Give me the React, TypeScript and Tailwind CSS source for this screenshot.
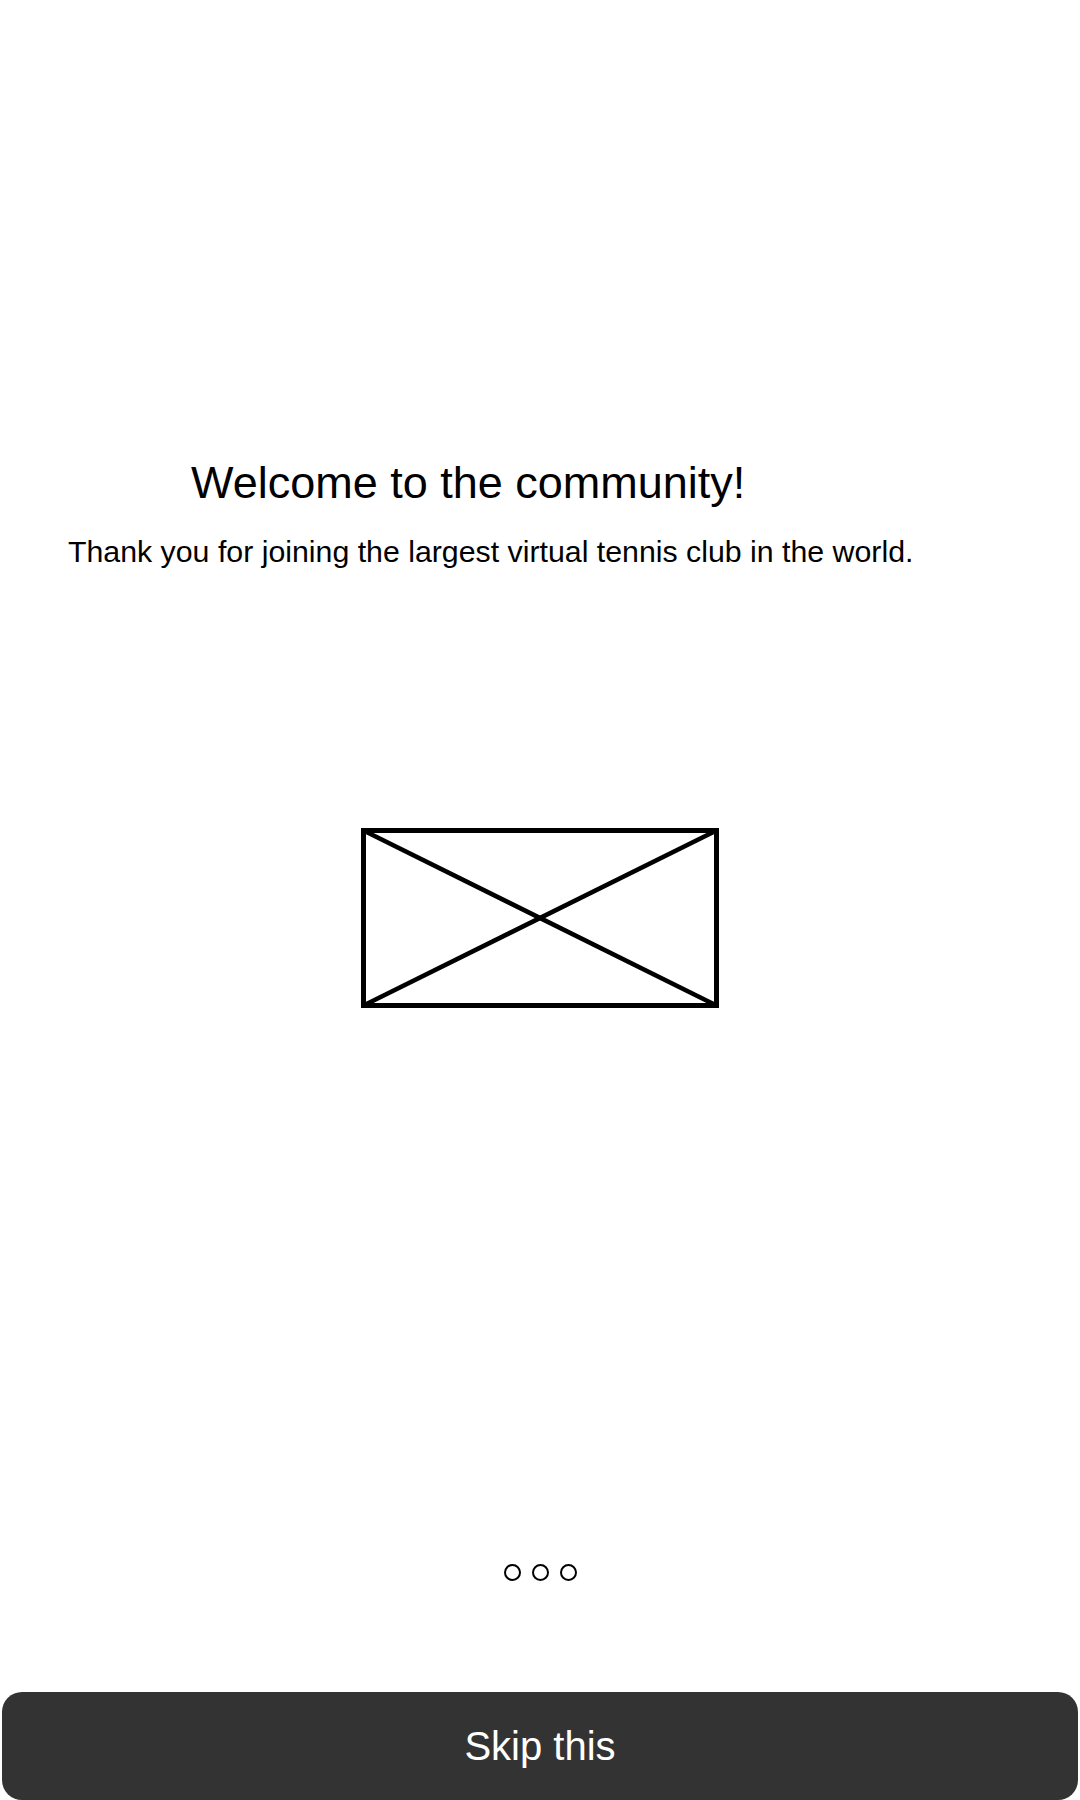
import React from 'react';

const ImagePlaceholder = () => (
    <svg width="358" height="180" viewBox="0 0 358 180" className="block">
        <rect x="2.5" y="2.5" width="353" height="175" fill="none" stroke="#000" strokeWidth="5" />
        <line x1="2.5" y1="2.5" x2="355.5" y2="177.5" stroke="#000" strokeWidth="4.5" />
        <line x1="2.5" y1="177.5" x2="355.5" y2="2.5" stroke="#000" strokeWidth="4.5" />
    </svg>
);

export default function App() {
    const pages = [0, 1, 2];

    return (
        <div className="w-[1080px] h-[1800px] bg-white flex flex-col overflow-hidden font-['Liberation_Sans',Arial,sans-serif] text-black">
            {/* Header copy */}
            <div className="pt-[457px]">
                <h1 className="pl-[191px] text-[45px] leading-[52px] font-normal">Welcome to the community!</h1>
                <p className="mt-[25px] pl-[68px] text-[30.3px] leading-[36px]">
                    Thank you for joining the largest virtual tennis club in the world.
                </p>
            </div>

            {/* Illustration */}
            <div className="mt-[258px] flex justify-center">
                <ImagePlaceholder />
            </div>

            {/* Pager */}
            <div className="mt-[556px] flex justify-center gap-[11px]">
                {pages.map((p) => (
                    <span key={p} className="w-[17px] h-[17px] rounded-full border-[2.5px] border-black" />
                ))}
            </div>

            <button className="mt-[111px] mx-[2px] h-[108px] rounded-[20px] bg-[#333333] text-white text-[40px] leading-none">
                Skip this
            </button>
        </div>
    );
}
